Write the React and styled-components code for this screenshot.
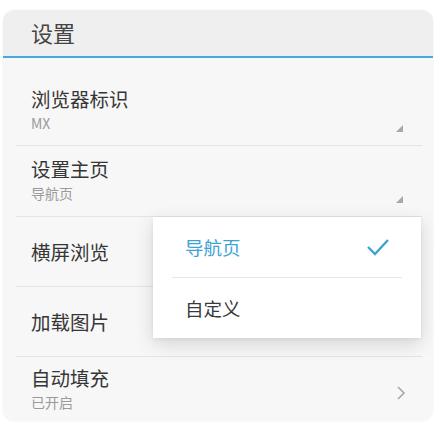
import React from 'react';
import styled, { createGlobalStyle } from 'styled-components';

const GlobalStyle = createGlobalStyle`
  body {
    margin: 0;
    background: #ffffff;
    font-family: "Noto Sans CJK SC", "Noto Sans", sans-serif;
  }
`;

const Page = styled.div`
  width: 440px;
  height: 426px;
  padding: 10px 7px 0 3px;
  box-sizing: border-box;
`;

const Card = styled.div`
  position: relative;
  height: 411px;
  border-radius: 12px;
  background: #f7f7f7;
  overflow: hidden;
  box-shadow: 0 0 2px rgba(0, 0, 0, 0.08);
`;

const Header = styled.div`
  height: 46px;
  background: #efefef;
  border-bottom: 2px solid #4aa8dc;
  display: flex;
  align-items: center;
  padding-left: 28px;
`;

const HeaderText = styled.span`
  font-size: 22px;
  line-height: 32px;
  color: #444;
  margin-top: -2px;
`;

const List = styled.div`
  padding: 0 11px 0 13px;
`;

const Row = styled.div`
  position: relative;
  height: ${p => p.h}px;
  box-sizing: border-box;
  padding: ${p => p.pt}px 0 0 15px;
  border-bottom: ${p => (p.last ? 'none' : '1px solid #e4e4e4')};
  display: flex;
  flex-direction: column;
  justify-content: ${p => (p.center ? 'center' : 'flex-start')};
`;

const Title = styled.div`
  font-size: 19.5px;
  line-height: 28px;
  color: #363636;
`;

const Sub = styled.div`
  font-size: 14px;
  line-height: 20px;
  color: #9a9a9a;
`;

const Corner = styled.div`
  position: absolute;
  right: 19px;
  bottom: 13px;
  width: 0;
  height: 0;
  border-left: 7px solid transparent;
  border-bottom: 7px solid #a8a8a8;
`;

const Chevron = styled.svg`
  position: absolute;
  right: 16px;
  top: 28px;
`;

const Popup = styled.div`
  position: absolute;
  left: 150px;
  top: 207px;
  width: 268px;
  background: #ffffff;
  box-shadow: 0 6px 18px rgba(0, 0, 0, 0.14), 0 1px 4px rgba(0, 0, 0, 0.06);
  padding: 0 19px;
  box-sizing: border-box;
`;

const Option = styled.div`
  height: 60px;
  display: flex;
  align-items: center;
  justify-content: space-between;
  padding: 0 12px 0 13px;
  font-size: 18.5px;
  color: ${p => (p.active ? '#3ea3d3' : '#3a3a3a')};
  border-bottom: ${p => (p.divider ? '1px solid #e6e6e6' : 'none')};
`;

export default function App() {
  return (
    <Page>
      <GlobalStyle />
      <Card>
        <Header>
          <HeaderText>设置</HeaderText>
        </Header>
        <List>
          <Row h={88} pt={27}>
            <Title>浏览器标识</Title>
            <Sub>MX</Sub>
            <Corner />
          </Row>
          <Row h={71} pt={9}>
            <Title>设置主页</Title>
            <Sub>导航页</Sub>
            <Corner />
          </Row>
          <Row h={70} pt={0} center>
            <Title>横屏浏览</Title>
          </Row>
          <Row h={70} pt={0} center>
            <Title>加载图片</Title>
          </Row>
          <Row h={64} pt={7} last>
            <Title>自动填充</Title>
            <Sub>已开启</Sub>
            <Chevron width="10" height="16" viewBox="0 0 10 16">
              <path d="M2 2 L8 8 L2 14" fill="none" stroke="#a8a8a8" strokeWidth="1.6" />
            </Chevron>
          </Row>
        </List>
        <Popup>
          <Option active divider>
            <span>导航页</span>
            <svg width="24" height="20" viewBox="0 0 24 20">
              <path d="M2 10 L9 17 L22 3" fill="none" stroke="#3ea3d3" strokeWidth="2.4" />
            </svg>
          </Option>
          <Option>
            <span>自定义</span>
          </Option>
        </Popup>
      </Card>
    </Page>
  );
}
